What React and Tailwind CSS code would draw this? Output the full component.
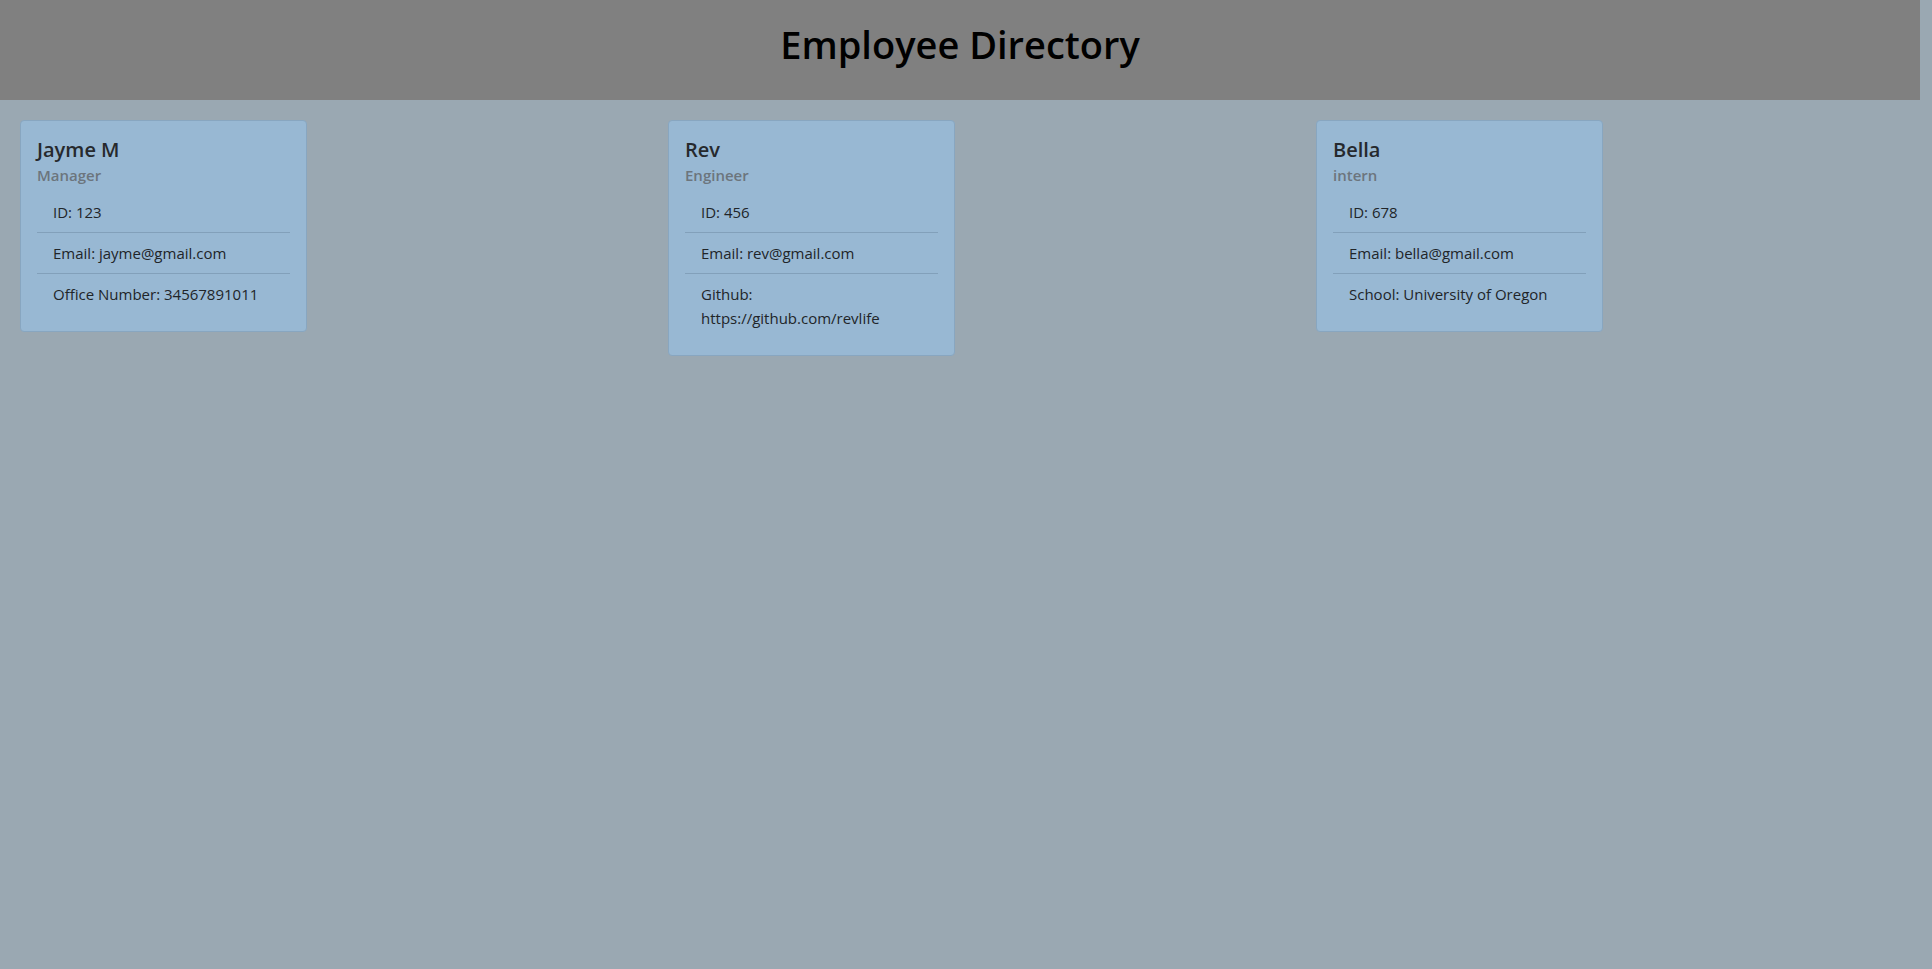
const employees = [
  {
    name: "Jayme M",
    role: "Manager",
    id: 123,
    email: "jayme@gmail.com",
    extra: "Office Number: 34567891011",
  },
  {
    name: "Rev",
    role: "Engineer",
    id: 456,
    email: "rev@gmail.com",
    extra: "Github: https://github.com/revlife",
  },
  {
    name: "Bella",
    role: "intern",
    id: 678,
    email: "bella@gmail.com",
    extra: "School: University of Oregon",
  },
];

const EmployeeCard = ({ employee }) => {
  return (
    <div className="ml-5 mt-5 w-[287px] rounded border border-[#88a6c0] bg-[#98b8d3] text-[#212529]">
      <div className="p-4">
        {/* Name + role */}
        <h5 className="mb-2 pt-px text-[20px] font-semibold leading-[24px] text-[#26292d]">
          {employee.name}
        </h5>
        <h6 className="-mt-1 mb-[7px] text-[15px] font-semibold leading-[19px] text-[#6c757d]">
          {employee.role}
        </h6>

        {/* Details */}
        <ul className="text-[15px] leading-[24px]">
          <li className="border-b border-[#82a0ba] px-4 py-2">ID: {employee.id}</li>
          <li className="border-b border-[#82a0ba] px-4 py-2">
            Email: {employee.email}
          </li>
          <li className="px-4 pb-[9px] pt-2">{employee.extra}</li>
        </ul>
      </div>
    </div>
  );
};

const App = () => {
  return (
    <div
      className="min-h-screen w-full overflow-hidden bg-[#9aa8b2]"
      style={{ fontFamily: '"Open Sans", "Noto Sans", sans-serif' }}
    >
      {/* Header */}
      <header className="flex h-[100px] w-[1920px] items-center justify-center bg-[#808080] pb-3">
        <h1 className="text-[38px] font-semibold text-black">Employee Directory</h1>
      </header>

      {/* Cards */}
      <div className="flex w-[1944px]">
        {employees.map((employee) => (
          <div key={employee.id} className="w-[648px] shrink-0">
            <EmployeeCard employee={employee} />
          </div>
        ))}
      </div>
    </div>
  );
};

export default App;
